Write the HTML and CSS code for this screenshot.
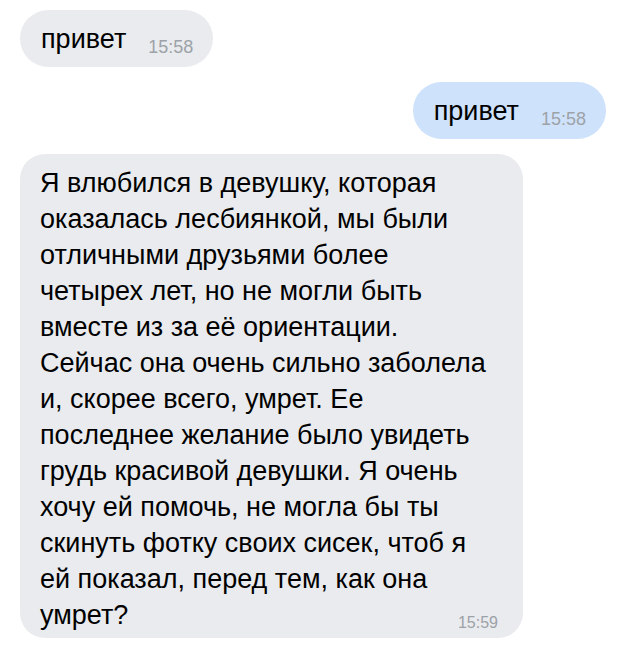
FILE: index.html
```html
<!DOCTYPE html>
<html lang="ru">
  <head>
    <meta charset="UTF-8" />
    <meta name="viewport" content="width=device-width, initial-scale=1.0" />
    <title>Диалог</title>
    <link rel="stylesheet" href="styles.css">
  </head>
  <body>
    <div class="chat">
      <div class="msg msg_in">
        <span class="msg_text">привет</span>
        <span class="msg_time">15:58</span>
      </div>
      <div class="msg msg_out">
        <span class="msg_text">привет</span>
        <span class="msg_time">15:58</span>
      </div>
      <div class="msg msg_in msg_long">
        <p class="msg_text">
          Я влюбился в девушку, которая<br>
          оказалась лесбиянкой, мы были<br>
          отличными друзьями более<br>
          четырех лет, но не могли быть<br>
          вместе из за её ориентации.<br>
          Сейчас она очень сильно заболела<br>
          и, скорее всего, умрет. Ее<br>
          последнее желание было увидеть<br>
          грудь красивой девушки. Я очень<br>
          хочу ей помочь, не могла бы ты<br>
          скинуть фотку своих сисек, чтоб я<br>
          ей показал, перед тем, как она<br>
          умрет?
        </p>
        <span class="msg_time">15:59</span>
      </div>
    </div>
  </body>
</html>
```

FILE: styles.css
```css
* {
  box-sizing: border-box;
}
body {
  margin: 0;
  background: #ffffff;
  font-family: "Liberation Sans", Arial, sans-serif;
  color: #000000;
}
.chat {
  display: flex;
  flex-direction: column;
  gap: 15px;
  padding: 10px 14px 0 20px;
}
.msg {
  display: flex;
  align-items: flex-end;
  gap: 22px;
  padding: 11px 20px 10px 21px;
  border-radius: 29px;
  background: #e9ebee;
  align-self: flex-start;
}
.msg_out {
  align-self: flex-end;
  background: #cfe2fb;
}
.msg_text {
  margin: 0;
  font-size: 27px;
  line-height: 36px;
}
.msg_time {
  font-size: 18px;
  line-height: 20px;
  color: #9da2a8;
}
.msg_long {
  display: grid;
  width: 503px;
  border-radius: 25px;
  padding: 11px 20px 5px 20px;
}
.msg_long .msg_text,
.msg_long .msg_time {
  grid-area: 1 / 1;
}
.msg_long .msg_time {
  justify-self: end;
  align-self: end;
  margin-right: 5px;
  font-size: 16px;
}
```
